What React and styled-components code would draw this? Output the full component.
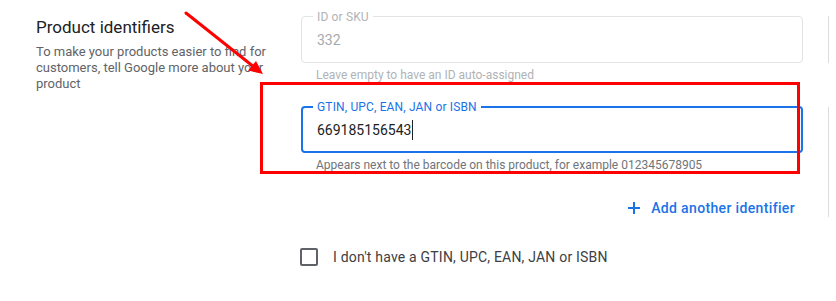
import React from "react";
import styled, { createGlobalStyle } from "styled-components";

const Global = createGlobalStyle`
  html, body { margin: 0; padding: 0; background: #fff; }
  body { font-family: Roboto, "Noto Sans", Arial, sans-serif; -webkit-font-smoothing: antialiased; }
  * { box-sizing: border-box; }
`;

const Page = styled.div`
  position: relative;
  width: 836px;
  height: 301px;
  display: flex;
  overflow: hidden;
`;

const Intro = styled.div`
  flex: 0 0 301px;
  padding: 15px 0 0 36px;
`;

const Heading = styled.h2`
  margin: 0;
  font-size: 17px;
  line-height: 24px;
  font-weight: 400;
  color: #202124;
`;

const Description = styled.p`
  margin: 5px 0 0;
  width: 232px;
  font-size: 13px;
  line-height: 16px;
  color: #5f6368;
`;

const Form = styled.div`
  flex: 1;
  padding-top: 16px;
  display: flex;
  flex-direction: column;
`;

const Row = styled.div`
  display: flex;
  align-items: flex-start;
  margin-top: ${(p) => p.$mt || 0}px;
`;

const Group = styled.div`
  width: 502px;
  display: flex;
  flex-direction: column;
`;

const SideRule = styled.div`
  width: 1px;
  height: ${(p) => p.$h}px;
  margin-left: 25px;
  margin-top: ${(p) => p.$mt || 0}px;
  background: #dadce0;
`;

const Box = styled.div`
  position: relative;
  height: 47px;
  border: ${(p) => (p.$focused ? "2px solid #1a73e8" : "1px solid #e3e3e3")};
  border-radius: 4px;
  display: flex;
  align-items: center;
  padding-left: ${(p) => (p.$focused ? 14 : 15)}px;
`;

const Label = styled.span`
  position: absolute;
  top: ${(p) => (p.$focused ? -9 : -8)}px;
  left: ${(p) => (p.$focused ? 10 : 11)}px;
  padding: 0 4px;
  background: #fff;
  font-size: 12px;
  line-height: 16px;
  letter-spacing: 0.15px;
  color: ${(p) => (p.$focused ? "#1a73e8" : "#b0b3b7")};
`;

const Value = styled.span`
  font-size: 14px;
  line-height: 20px;
  color: ${(p) => (p.$disabled ? "#a6a9ad" : "#202124")};
  border-right: ${(p) => (p.$caret ? "1px solid #202124" : "none")};
  padding-right: 1px;
`;

const Helper = styled.div`
  margin-top: 4px;
  padding-left: 15px;
  font-size: 12px;
  line-height: 16px;
  color: ${(p) => (p.$disabled ? "#b0b3b7" : "#70757a")};
`;

const Actions = styled.div`
  display: flex;
  justify-content: flex-end;
  margin-top: 17px;
`;

const TextButton = styled.button`
  height: 36px;
  display: flex;
  align-items: center;
  gap: 11px;
  padding: 0 8px;
  border: none;
  background: none;
  font-family: inherit;
  font-size: 14px;
  font-weight: 500;
  letter-spacing: 0.35px;
  color: #1a73e8;
  cursor: pointer;
`;

const CheckRow = styled.label`
  display: flex;
  align-items: center;
  gap: 15px;
  height: 40px;
  margin: 11px 0 0 -1px;
  font-size: 14px;
  letter-spacing: 0.2px;
  color: #3c4043;
`;

const CheckBox = styled.span`
  width: 18px;
  height: 18px;
  border: 2px solid #5f6368;
  border-radius: 2px;
  margin-bottom: 1px;
`;

const Highlight = styled.div`
  position: absolute;
  left: 260px;
  top: 82px;
  width: 540px;
  height: 92px;
  border: 3px solid #ff0000;
  pointer-events: none;
`;

const ArrowLayer = styled.svg`
  position: absolute;
  left: 0;
  top: 0;
  pointer-events: none;
`;

export default function App() {
  return (
    <Page>
      <Global />
      <Intro>
        <Heading>Product identifiers</Heading>
        <Description>
          To make your products easier to find for customers, tell Google more about your product
        </Description>
      </Intro>
      <Form>
        <Row>
          <Group>
            <Box>
              <Label>ID or SKU</Label>
              <Value $disabled>332</Value>
            </Box>
            <Helper $disabled>Leave empty to have an ID auto-assigned</Helper>
          </Group>
          <SideRule $h={47} />
        </Row>
        <Row $mt={23}>
          <Group>
            <Box $focused>
              <Label $focused>GTIN, UPC, EAN, JAN or ISBN</Label>
              <Value $caret>669185156543</Value>
            </Box>
            <Helper>Appears next to the barcode on this product, for example 012345678905</Helper>
            <Actions>
              <TextButton type="button">
                <svg width="12" height="12" viewBox="0 0 12 12">
                  <path d="M6 0v12M0 6h12" stroke="#1a73e8" strokeWidth="2" />
                </svg>
                Add another identifier
              </TextButton>
            </Actions>
          </Group>
          <SideRule $h={110} $mt={1} />
        </Row>
        <CheckRow>
          <CheckBox />
          I don't have a GTIN, UPC, EAN, JAN or ISBN
        </CheckRow>
      </Form>
      <Highlight />
      <ArrowLayer width="836" height="301" viewBox="0 0 836 301">
        <line x1="186" y1="13" x2="254" y2="67" stroke="#ff0000" strokeWidth="3" strokeLinecap="round" />
        <polygon points="263,74 248,70.5 256,61" fill="#ff0000" />
      </ArrowLayer>
    </Page>
  );
}
